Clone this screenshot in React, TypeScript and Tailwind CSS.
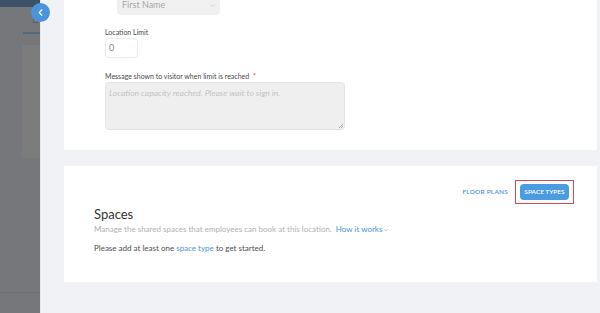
import { ChevronLeft, ChevronDown } from 'lucide-react';

function Backdrop() {
  return (
    <div className="relative w-[40px] shrink-0 bg-[#76777a] overflow-hidden">
      <div className="h-[7px] bg-[#3c5168]" />
      <div className="ml-[33px] mt-[12px] w-[5px] h-[4px] border border-[#5f6061]" />
      <div className="ml-[23px] mt-[9px] h-[2px] bg-[#56687b]" />
      <div className="ml-[22px] mt-[11px] h-[113px] bg-[#7b7b7c]" />
      <div className="mt-[134px] h-px bg-[#6c6d6e]" />
    </div>
  );
}

export default function App() {
  return (
    <div
      className="relative flex w-[600px] h-[313px] overflow-hidden bg-[#f0f2f5]"
      style={{ fontFamily: 'Lato, "Open Sans", sans-serif' }}
    >
      <Backdrop />

      <button className="absolute left-[31px] top-[3px] z-10 w-[19px] h-[19px] rounded-full bg-[#4a94dc] flex items-center justify-center text-white">
        <ChevronLeft className="w-[11px] h-[11px]" strokeWidth={2.5} />
      </button>

      <div className="flex-1 border-l border-[#e4e6ea] pl-[23px] pr-[3px]">
        {/* limit settings card */}
        <div className="bg-white h-[150px] pl-[41px] overflow-hidden">
          <div className="ml-[12px] mt-[-5px] w-[103px] h-[20px] rounded-sm bg-[#f0f0f0] flex items-center justify-between pl-[5px] pr-[4px] text-[9px] text-[#a9a9a9]">
            <span>First Name</span>
            <ChevronDown className="w-[7px] h-[7px] text-[#c0c0c0]" />
          </div>

          <div className="mt-[13px] text-[7px] text-[#4a4a4a] leading-[8px]">Location Limit</div>
          <div className="mt-[2px] w-[33px] h-[20px] border border-[#ebebeb] rounded-sm flex items-center pl-[3px] text-[9px] text-[#8a8a8a]">
            0
          </div>

          <div className="mt-[14px] text-[7px] text-[#4a4a4a] leading-[8px]">
            Message shown to visitor when limit is reached <span className="text-[#e5484d] ml-[2px]">*</span>
          </div>
          <div className="relative mt-[2px] w-[240px] h-[48px] rounded-sm border border-[#e4e4e4] bg-[#efefef] px-[3px] pt-[4px] text-[8.5px] italic text-[#c4c4c4]">
            Location capacity reached. Please wait to sign in.
            <svg className="absolute right-[1px] bottom-[1px] w-[5px] h-[5px]" viewBox="0 0 5 5">
              <path d="M1 5 L5 1 M3 5 L5 3" stroke="#8a8a8a" strokeWidth="0.7" />
            </svg>
          </div>
        </div>

        {/* spaces card */}
        <div className="mt-[16px] bg-white h-[116px] pl-[30px] pr-[23px] pt-[14px]">
          <div className="flex items-center justify-end gap-[7px]">
            <span className="text-[6.5px] font-semibold tracking-[0.2px] text-[#4a94dc]">FLOOR PLANS</span>
            <div className="flex border border-[#e0474c] px-[4px] py-[3px]">
              <button className="w-[49px] h-[16px] rounded-sm bg-[#4a9be0] text-white text-[6.5px] font-semibold leading-none">
                SPACE TYPES
              </button>
            </div>
          </div>

          <h2 className="mt-[2px] text-[13px] leading-[16px] text-[#333]">Spaces</h2>
          <p className="mt-[2px] text-[8px] leading-[10px] text-[#b0b0b0]">
            Manage the shared spaces that employees can book at this location.{' '}
            <span className="ml-[2px] text-[#4a94dc]">
              How it works
              <ChevronDown className="inline w-[6px] h-[6px] ml-[1px]" />
            </span>
          </p>
          <p className="mt-[9px] text-[8px] leading-[10px] text-[#4f4f4f]">
            Please add at least one <span className="text-[#4a94dc]">space type</span> to get started.
          </p>
        </div>
      </div>
    </div>
  );
}
